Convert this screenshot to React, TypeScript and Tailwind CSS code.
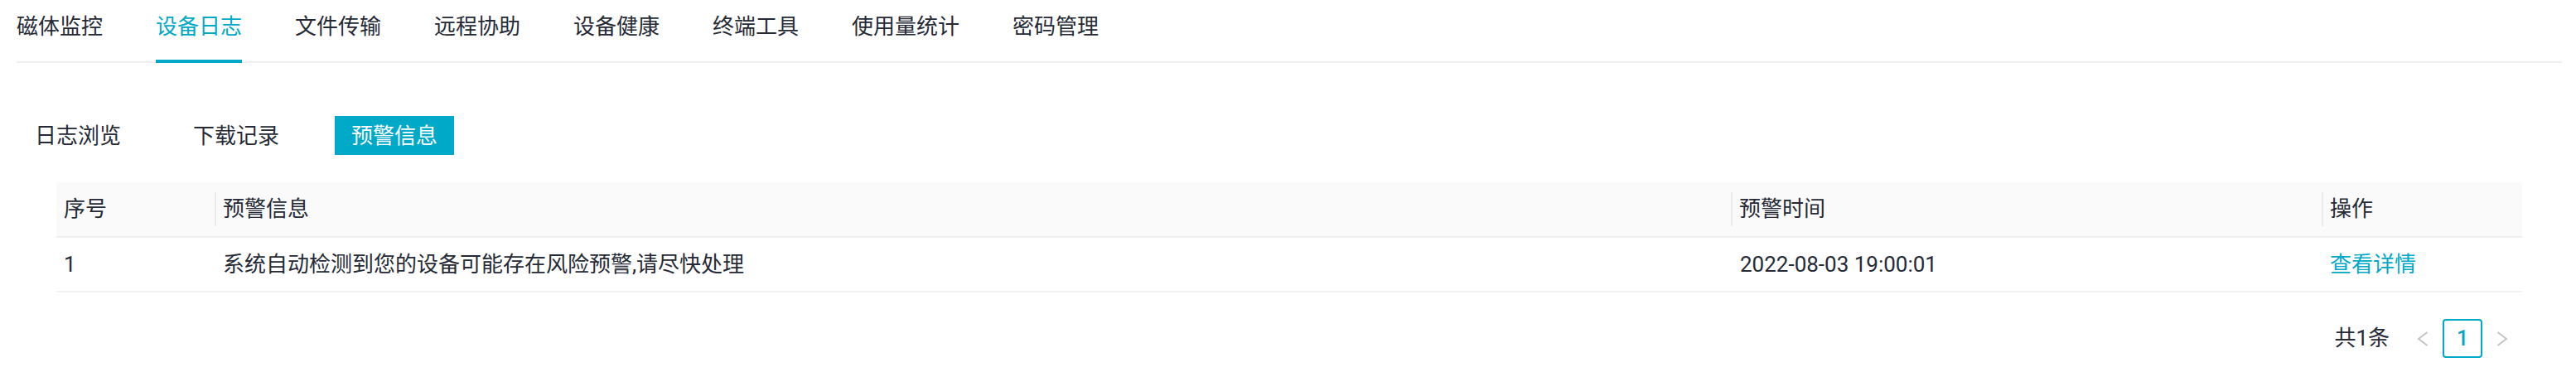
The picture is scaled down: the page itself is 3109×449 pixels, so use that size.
import React from "react";

const tabs = ["磁体监控", "设备日志", "文件传输", "远程协助", "设备健康", "终端工具", "使用量统计", "密码管理"];
const subTabs = ["日志浏览", "下载记录", "预警信息"];

function Chevron({ dir }: { dir: "left" | "right" }) {
  return (
    <svg width="14" height="18" viewBox="0 0 14 18" fill="none">
      <polyline
        points={dir === "left" ? "12.5,1 2,9 12.5,17" : "1.5,1 12,9 1.5,17"}
        stroke="#c4c4c4"
        strokeWidth="2"
        strokeLinejoin="miter"
      />
    </svg>
  );
}

export default function App() {
  return (
    <div
      className="w-[3109px] h-[449px] bg-white text-[26px] text-[#252a36] overflow-hidden"
      style={{ fontFamily: 'Roboto, "Noto Sans CJK SC", sans-serif' }}
    >
      <nav className="ml-[20px] mr-[17px] h-[76px] flex gap-[64px] border-b-2 border-[#efefef]">
        {tabs.map((t, i) => (
          <div
            key={t}
            className={
              "relative pt-[13px] leading-[39px] " + (i === 1 ? "text-[#00a9c7]" : "")
            }
          >
            {t}
            {i === 1 && <span className="absolute left-0 right-0 bottom-[-2px] h-[4px] bg-[#00a9c7]" />}
          </div>
        ))}
      </nav>

      <div className="mt-[64px] ml-[22px] flex gap-[47px]">
        {subTabs.map((t, i) => (
          <div
            key={t}
            className={
              "h-[47px] px-[20px] flex items-center leading-none " +
              (i === 2 ? "bg-[#00a9c7] text-white" : "")
            }
          >
            {t}
          </div>
        ))}
      </div>

      <div className="mt-[33px] ml-[68px] w-[2976px]">
        <div className="grid grid-cols-[191px_1830px_713px_242px] h-[67px] bg-[#fafafa] border-b-2 border-[#f0f0f0] rounded-t-[4px]">
          <div className="flex items-center pl-[9px]">序号</div>
          {["预警信息", "预警时间", "操作"].map((h) => (
            <div key={h} className="flex items-center">
              <div className="w-[2px] h-[41px] bg-[#ebebeb]" />
              <span className="ml-[8px]">{h}</span>
            </div>
          ))}
        </div>
        <div className="grid grid-cols-[191px_1830px_713px_242px] h-[66px] border-b-2 border-[#f0f0f0]">
          <div className="flex items-center pl-[9px]">1</div>
          <div className="flex items-center pl-[10px]">系统自动检测到您的设备可能存在风险预警,请尽快处理</div>
          <div className="flex items-center pl-[11px]">2022-08-03 19:00:01</div>
          <div className="flex items-center pl-[10px] text-[#00a9c7]">查看详情</div>
        </div>

        <div className="mt-[32px] h-[47px] flex items-center justify-end">
          <span className="mr-[16px]">共1条</span>
          <div className="w-[48px] h-[47px] flex items-center justify-center">
            <Chevron dir="left" />
          </div>
          <div className="w-[48px] h-[47px] flex items-center justify-center border-2 border-[#00a9c7] rounded-[4px] text-[#00a9c7] font-medium text-[25px]">
            1
          </div>
          <div className="w-[48px] h-[47px] flex items-center justify-center">
            <Chevron dir="right" />
          </div>
        </div>
      </div>
    </div>
  );
}
